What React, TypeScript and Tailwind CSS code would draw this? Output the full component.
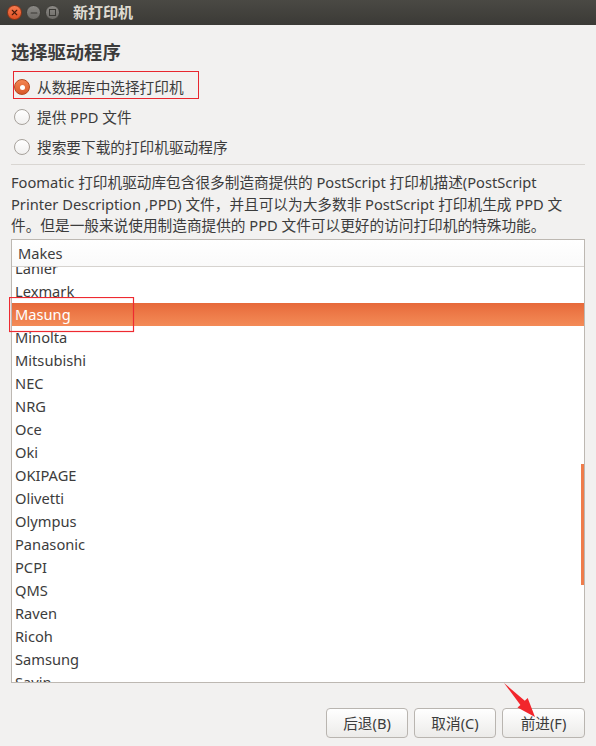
import React from 'react';
import { X, Minus } from 'lucide-react';

const makes = [
  'Lanier', 'Lexmark', 'Masung', 'Minolta', 'Mitsubishi', 'NEC', 'NRG', 'Oce', 'Oki', 'OKIPAGE',
  'Olivetti', 'Olympus', 'Panasonic', 'PCPI', 'QMS', 'Raven', 'Ricoh', 'Samsung', 'Savin',
];

const options = ['从数据库中选择打印机', '提供 PPD 文件', '搜索要下载的打印机驱动程序'];

const Radio: React.FC<{ checked: boolean }> = ({ checked }) =>
  checked ? (
    <span className="flex items-center justify-center w-[16px] h-[16px] rounded-full border border-[#b4491f] bg-gradient-to-b from-[#f38552] to-[#d9592a]">
      <span className="w-[5px] h-[5px] rounded-full bg-white" />
    </span>
  ) : (
    <span className="w-[16px] h-[16px] rounded-full border border-[#a7a29c] bg-gradient-to-b from-white to-[#f1f0ef]" />
  );

export default function App() {
  return (
    <div
      className="relative w-[596px] h-[746px] bg-[#f2f1f0] flex flex-col text-[#3c3c3c] text-[14.67px] overflow-hidden"
      style={{ fontFamily: '"Noto Sans", "Noto Sans CJK SC", sans-serif' }}
    >
      {/* title bar */}
      <div className="h-[25px] flex items-center pl-[7px] bg-gradient-to-b from-[#4a4944] to-[#3b3a36]">
        <div className="flex gap-[4px]">
          <span className="flex items-center justify-center w-[15px] h-[15px] rounded-full border border-[#8a3417] bg-gradient-to-b from-[#f77c50] to-[#df4e20]">
            <X size={9} strokeWidth={3} color="#4a1c0c" />
          </span>
          <span className="flex items-center justify-center w-[15px] h-[15px] rounded-full border border-[#3e3d39] bg-gradient-to-b from-[#8b8985] to-[#6c6a66]">
            <Minus size={10} strokeWidth={2.5} color="#3a3935" />
          </span>
          <span className="flex items-center justify-center w-[15px] h-[15px] rounded-full border border-[#3e3d39] bg-gradient-to-b from-[#8b8985] to-[#6c6a66]">
            <span className="w-[7px] h-[7px] border-[1.5px] border-[#3a3935]" />
          </span>
        </div>
        <span className="ml-[13px] font-bold text-[15px] text-[#dfdbd2]">新打印机</span>
      </div>

      <div className="flex flex-col px-[11px]">
        <h1 className="mt-[15px] h-[24px] leading-[24px] text-[18.3px] font-bold">选择驱动程序</h1>

        <div className="mt-[8px] flex flex-col">
          {options.map((o, i) => (
            <div key={o} className="h-[30px] flex items-center pl-[3px] gap-[7px]">
              <Radio checked={i === 0} />
              <span>{o}</span>
            </div>
          ))}
        </div>

        <div className="mt-[2px] h-px bg-[#d9d6d2]" />

        <p className="mt-[7px] leading-[21.5px] whitespace-nowrap">
          Foomatic 打印机驱动库包含很多制造商提供的 PostScript 打印机描述(PostScript
          <br />
          Printer Description ,PPD) 文件，并且可以为大多数非 PostScript 打印机生成 PPD 文
          <br />
          件。但是一般来说使用制造商提供的 PPD 文件可以更好的访问打印机的特殊功能。
        </p>

        {/* makes list */}
        <div className="relative mt-[2px] h-[444px] flex flex-col border border-[#bdb8b2] bg-white">
          <div className="h-[27px] shrink-0 flex items-center pl-[6px] border-b border-[#d6d3cf] bg-gradient-to-b from-white to-[#fafafa]">
            Makes
          </div>
          <div className="flex-1 overflow-hidden">
            <div className="-mt-[10px]">
              {makes.map((m) =>
                m === 'Masung' ? (
                  <div key={m} className="h-[23px] flex items-center pl-[3px] text-white bg-gradient-to-b from-[#e7693a] to-[#f38b57]">
                    {m}
                  </div>
                ) : (
                  <div key={m} className="h-[23px] flex items-center pl-[3px]">
                    {m}
                  </div>
                )
              )}
            </div>
          </div>
          <div className="absolute right-0 top-[224px] w-[3px] h-[121px] bg-[#ef7d4c]" />
        </div>

        <div className="mt-[25px] flex justify-end gap-[6px]">
          <button className="w-[82px] h-[30px] rounded-[4px] border border-[#b9b5b0] bg-gradient-to-b from-white to-[#ecebe9]">后退(B)</button>
          <button className="w-[82px] h-[30px] rounded-[4px] border border-[#b9b5b0] bg-gradient-to-b from-white to-[#ecebe9]">取消(C)</button>
          <button className="w-[83px] h-[30px] rounded-[4px] border border-[#b9b5b0] bg-gradient-to-b from-white to-[#ecebe9]">前进(F)</button>
        </div>
      </div>

      {/* annotations */}
      <div className="absolute left-[13px] top-[71px] w-[186px] h-[28px] border border-[#e8272f]" />
      <svg className="absolute left-[9px] top-[297px]" width="126" height="36" viewBox="0 0 126 36">
        <rect x="0.5" y="0.5" width="124" height="34" fill="none" stroke="#ee2a31" strokeWidth="1.2" />
      </svg>
      <svg className="absolute left-[500px] top-[678px]" width="42" height="44" viewBox="0 0 42 44">
        <polygon points="4,5 24.8,22.7 27.7,20 35,39 17.5,29.6 20.4,26.9" fill="#f2262c" />
      </svg>
    </div>
  );
}
